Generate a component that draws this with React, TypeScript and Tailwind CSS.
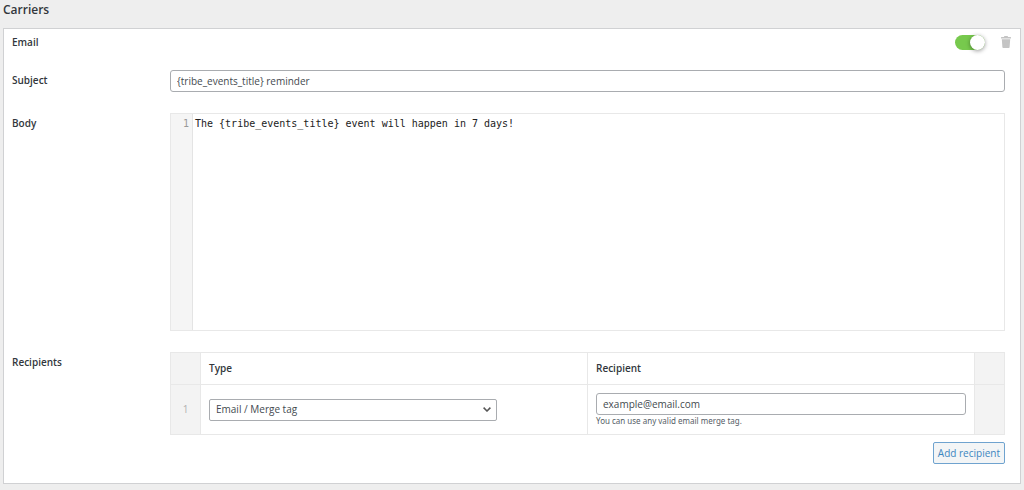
import React, { useState } from "react";

interface FieldRowProps {
  label: string;
  htmlFor?: string;
  children: React.ReactNode;
}

const FieldRow: React.FC<FieldRowProps> = ({ label, htmlFor, children }) => {
  const labelClass = "w-[158px] shrink-0 text-[10px] leading-5 font-semibold text-[#32373c]";

  return (
    <div className="flex items-start">
      {htmlFor ? (
        <label htmlFor={htmlFor} className={labelClass}>{label}</label>
      ) : (
        <h4 className={labelClass}>{label}</h4>
      )}
      <div className="min-w-0 flex-1">{children}</div>
    </div>
  );
};

const TrashIcon: React.FC = () => (
  <svg viewBox="0 0 10 12" className="h-3 w-2.5" fill="currentColor" aria-hidden="true">
    <path d="M3 1C3 .4 3.4 0 4 0h2c.6 0 1 .4 1 1h2.500c.3 0 .5.2.5.5V2.600H0V1.500C0 1.200.2 1 .5 1H3z" />
    <path d="M.8 3.200h8.400l-.6 8c0 .5-.4.8-.8.8H2.200c-.4 0-.8-.3-.8-.8L.8 3.200z" />
  </svg>
);

const App: React.FC = () => {
  const [enabled, setEnabled] = useState(true);
  const [subject, setSubject] = useState("{tribe_events_title} reminder");
  const [body, setBody] = useState("The {tribe_events_title} event will happen in 7 days!");
  const [type, setType] = useState("email");
  const [recipient, setRecipient] = useState("example@email.com");

  return (
    <div className="min-h-screen bg-[#eeeeee] px-[3px] pb-1.5 font-['Open_Sans','Noto_Sans',sans-serif] text-[10px] text-[#444a50]">
      <h2 className="pb-2 text-[12px] leading-5 font-semibold text-[#32373c]">Carriers</h2>

      <section className="border border-[#d0d1d3] bg-white pt-1 pr-[15px] pb-[19px] pl-2">
        <div className="flex h-[18px] items-center">
          <h3 className="flex-1 font-semibold text-[#32373c]">Email</h3>
          <label className="flex cursor-pointer items-center">
            <input
              type="checkbox"
              aria-label="Enable email carrier"
              checked={enabled}
              onChange={(e) => setEnabled(e.target.checked)}
              className="peer sr-only"
            />
            <span className="flex h-[15px] w-[30px] rounded-full bg-[#cccccc] peer-checked:justify-end peer-checked:bg-[#77c94d]">
              <span className="size-[15px] rounded-full bg-white shadow-[0_1px_4px_rgba(0,0,0,0.4)]" />
            </span>
          </label>
          <button type="button" aria-label="Remove carrier" className="ml-4 -mr-1.5 text-[#c4c4c4]">
            <TrashIcon />
          </button>
        </div>

        <div className="mt-[19px] flex flex-col gap-[21px]">
          <FieldRow label="Subject" htmlFor="subject">
            <input
              id="subject"
              type="text"
              value={subject}
              onChange={(e) => setSubject(e.target.value)}
              className="block h-[22px] w-full rounded-[3px] border border-[#a9acb0] bg-white px-1.5 text-[10px]"
            />
          </FieldRow>

          <FieldRow label="Body" htmlFor="body">
            <div className="flex h-[218px] border border-[#e8e8e8] font-['DejaVu_Sans_Mono',monospace] text-[10px] leading-5">
              <div className="w-[22px] border-r border-[#e4e4e4] bg-[#f5f5f5] pr-[3px] text-right text-[#999999]">1</div>
              <textarea
                id="body"
                spellCheck={false}
                value={body}
                onChange={(e) => setBody(e.target.value)}
                className="block min-w-0 flex-1 resize-none pl-0.5 text-[#222222] outline-none"
              />
            </div>
          </FieldRow>

          <FieldRow label="Recipients">
            <table className="w-full table-fixed border-collapse border border-[#e8e8e8]">
              <colgroup>
                <col className="w-[30px]" />
                <col />
                <col />
                <col className="w-[30px]" />
              </colgroup>
              <thead>
                <tr className="h-8 text-left text-[#32373c]">
                  <td className="border border-[#e8e8e8] bg-[#f3f3f3]" />
                  <th className="border border-[#e8e8e8] px-2 font-semibold">Type</th>
                  <th className="border border-[#e8e8e8] px-2 font-semibold">Recipient</th>
                  <td className="border border-[#e8e8e8] bg-[#f3f3f3]" />
                </tr>
              </thead>
              <tbody>
                <tr className="h-[50px]">
                  <td className="border border-[#e8e8e8] bg-[#f3f3f3] text-center text-[#b0b0b0]">1</td>
                  <td className="border border-[#e8e8e8] px-2">
                    <div className="relative w-72">
                      <select
                        aria-label="Type"
                        value={type}
                        onChange={(e) => setType(e.target.value)}
                        className="block h-[22px] w-full appearance-none rounded-[2px] border border-[#a9acb0] bg-white pr-5 pl-1.5 text-[10px]"
                      >
                        <option value="email">Email / Merge tag</option>
                      </select>
                      <svg
                        viewBox="0 0 8 5"
                        className="pointer-events-none absolute top-2 right-1.5 h-[5px] w-2"
                        fill="none"
                        stroke="#555555"
                        strokeWidth="1.5"
                        aria-hidden="true"
                      >
                        <path d="M.6.6 4 4 7.4.6" />
                      </svg>
                    </div>
                  </td>
                  <td className="border border-[#e8e8e8] px-2">
                    <input
                      type="text"
                      aria-label="Recipient"
                      value={recipient}
                      onChange={(e) => setRecipient(e.target.value)}
                      className="block h-[22px] w-full rounded-[3px] border border-[#a9acb0] bg-white px-1.5 text-[10px]"
                    />
                    <p className="font-['Noto_Sans',sans-serif] text-[8px] leading-3 text-[#555d66]">
                      You can use any valid email merge tag.
                    </p>
                  </td>
                  <td className="border border-[#e8e8e8] bg-[#f3f3f3]" />
                </tr>
              </tbody>
            </table>
            <div className="mt-[7px] flex justify-end">
              <button
                type="button"
                className="h-[22px] rounded-[2px] border border-[#6fa3cf] bg-[#f3f5f6] px-1 text-[10px] text-[#3c86c0]"
              >
                Add recipient
              </button>
            </div>
          </FieldRow>
        </div>
      </section>
    </div>
  );
};

export default App;
